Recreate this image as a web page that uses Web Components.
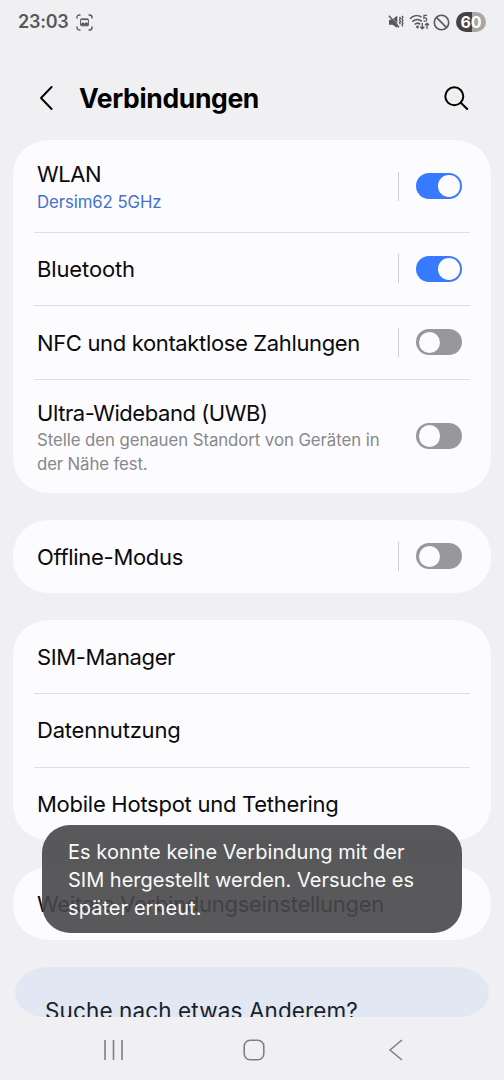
<!DOCTYPE html>
<html lang="de">
<head>
<meta charset="utf-8">
<title>Verbindungen</title>
<style>
html,body{margin:0;height:100%}
body{background:#f0f0f2;font-family:Inter,Roboto,"Liberation Sans",sans-serif;color:#0a0a0c;overflow:hidden}
</style>
</head>
<body>
<phone-screen>
  <status-bar slot="status"></status-bar>
  <page-header slot="header"><fit-text w="180">Verbindungen</fit-text></page-header>
  <settings-card>
    <settings-row style="--h:92px" toggle="on" split><fit-text w="64">WLAN</fit-text><fit-text slot="sub" w="124.5" style="color:#4372cc">Dersim62 5GHz</fit-text></settings-row>
    <settings-row toggle="on" split><fit-text w="98">Bluetooth</fit-text></settings-row>
    <settings-row toggle="off" split><fit-text w="323">NFC und kontaktlose Zahlungen</fit-text></settings-row>
    <settings-row style="--h:114px" toggle="off"><fit-text w="230.5">Ultra-Wideband (UWB)</fit-text><fit-text slot="sub" w="342.5">Stelle den genauen Standort von Geräten in</fit-text><fit-text slot="sub" w="110.5">der Nähe fest.</fit-text></settings-row>
  </settings-card>
  <settings-card>
    <settings-row toggle="off" split><fit-text w="146">Offline-Modus</fit-text></settings-row>
  </settings-card>
  <settings-card>
    <settings-row><fit-text w="138">SIM-Manager</fit-text></settings-row>
    <settings-row><fit-text w="143.5">Datennutzung</fit-text></settings-row>
    <settings-row><fit-text w="301.5">Mobile Hotspot und Tethering</fit-text></settings-row>
  </settings-card>
  <settings-card>
    <settings-row><fit-text w="347">Weitere Verbindungseinstellungen</fit-text></settings-row>
  </settings-card>
  <search-hint><fit-text w="313">Suche nach etwas Anderem?</fit-text></search-hint>
  <nav-bar slot="nav"></nav-bar>
  <toast-message slot="toast"><fit-text w="336.5">Es konnte keine Verbindung mit der</fit-text><fit-text w="346">SIM hergestellt werden. Versuche es</fit-text><fit-text w="133.5">später erneut.</fit-text></toast-message>
</phone-screen>
<script>
function element(name, html, setup) {
  customElements.define(name, class extends HTMLElement {
    connectedCallback() {
      if (this.shadowRoot) return;
      this.attachShadow({mode: 'open'}).innerHTML = html;
      if (setup) setup(this, this.shadowRoot);
    }
  });
}

element('phone-screen', `<style>
:host{display:flex;flex-direction:column;position:relative;width:504px;height:1080px;overflow:hidden;background:#f0f0f2}
main{height:877px;box-sizing:border-box;padding:0 13.5px 0 13px;display:flex;flex-direction:column;gap:26.45px;overflow:hidden}
</style><slot name="status"></slot><slot name="header"></slot><main><slot></slot></main><slot name="nav"></slot><slot name="toast"></slot>`);

element('status-bar', `<style>
:host{display:flex;align-items:center;height:44px;box-sizing:border-box;padding:0 18px;color:#59595b}
.time{font-size:18px;font-weight:600;line-height:22px}
svg{display:block;flex:none}
.shot{margin-left:7.500px}.right{margin-left:auto;display:flex;align-items:center}
.battery{width:30px;height:20px;margin-left:6px;border-radius:10px;background:linear-gradient(90deg,#434345 55%,#a7a7a9 55%);color:#fff;font:700 16px/20px Inter,sans-serif;text-align:center}
</style>
<span class="time"><fit-text w="50.5">23:03</fit-text></span>
<svg class="shot" width="17" height="17" viewBox="0 0 17 17" fill="none" stroke="currentColor" stroke-width="1.400"><path d="M1 4.500V3.500Q1 1 3.500 1h1M12.500 1h1Q16 1 16 3.500v1M16 12.500v1q0 2.500-2.500 2.500h-1M4.500 16h-1Q1 16 1 13.500v-1"/><rect x="4.600" y="5" width="7.800" height="6.800" rx=".8" stroke-width="1"/><path d="M5 11.500V9.800l2-1.500 1.600 1.100 1.700-1.200 2.100 1.300v2z" fill="currentColor" stroke="none"/><path d="M4.800 5.400h7.400" stroke-width="1.300"/></svg>
<span class="right">
<svg width="16" height="16" viewBox="0 0 16 16" fill="none" stroke="currentColor" stroke-width="1.300"><path d="M1 5.800h3.200L9.300 1.500V14L4.500 10.700H1z" fill="currentColor" stroke="none"/><path d="M2 2 12 13" stroke="#f0f0f2" stroke-width=".8"/><path d="M1 1.800 11 13.300" stroke-width="1.500"/><path d="M11.500 3l.9 1.200-.9 1.500.9 1.500-.9 1.500.9 1.500M14 1.800l.9 1.300-.9 1.600.9 1.600-.9 1.600.9 1.600-.9 1.600.9 1.400"/></svg>
<svg style="margin-left:5.500px" width="21" height="17" viewBox="0 0 21 17" fill="none" stroke="currentColor" stroke-width="1.600"><path d="M1 4.700C4.300 1.400 9 .9 12.500 3.100M3.300 7.700c2.800-2.700 6.800-2.800 9.600-.4M5.700 10.500c1.600-1.500 3.900-1.500 5.500-.1"/><circle cx="8.500" cy="13" r="1.400" fill="currentColor" stroke="none"/><path d="M18 1.400h-3l-.2 2.800c1.500-.6 3-.1 3 1.300S16 7.500 14.500 6.800" stroke-width="1.200"/><path d="M13.300 9v5.700M11.300 12.800l2 2 2-2M18 15V9.200M16 11.200l2-2 2 2" stroke-width="1.300"/></svg>
<svg style="margin-left:3px" width="17" height="17" viewBox="0 0 17 17" fill="none" stroke="currentColor" stroke-width="1.600"><circle cx="8.500" cy="8.500" r="7.200"/><path d="M3.400 3.400 13.600 13.600"/></svg>
<span class="battery">60</span></span>`);

element('page-header', `<style>
:host{display:flex;align-items:center;height:96px;box-sizing:border-box;padding:12px 35px 0 39px}
.title{font-size:26.500px;font-weight:700;line-height:34px;color:#000;margin:0 0 1px 25px}
svg{display:block}.search{margin-left:auto}
</style>
<svg width="15" height="26" viewBox="0 0 15 26" fill="none" stroke="#000" stroke-width="1.900" stroke-linecap="round" stroke-linejoin="round"><path d="M12.600 2 2 13l10.600 11"/></svg>
<span class="title"><slot></slot></span>
<svg class="search" width="26" height="26" viewBox="0 0 26 26" fill="none" stroke="#000" stroke-width="2" stroke-linecap="round"><circle cx="11.300" cy="11.300" r="9"/><path d="M17.800 17.800 24.200 24"/></svg>`);

element('settings-card', `<style>
:host{display:block;flex:none;background:#fcfcfe;border-radius:35px}
::slotted(:not(:last-child)){--line:#dedee0}
</style><slot></slot>`);

element('settings-row', `<style>
:host{display:flex;align-items:center;height:var(--h,73.6px);box-sizing:border-box;padding:0 28.5px 0 24px;position:relative}
.text{font-size:22px;line-height:29px;margin-top:1.400px}
.text.has-sub{margin-top:3px}
.sub{font-size:16.800px;line-height:23.600px;color:#88888a}
.sub ::slotted(*){display:block}
.has-sub .sub{margin-top:1.500px}
hr{position:absolute;left:21px;right:20.500px;bottom:-.8px;height:1px;margin:0;border:0;background:var(--line,transparent)}
.end{margin-left:auto;display:flex;align-items:center;gap:17px}
.bar{width:1px;height:29px;background:#cdcdd0}
</style>
<div class="text"><slot></slot><div class="sub"><slot name="sub"></slot></div></div>
<div class="end"></div><hr>`, (host, root) => {
  if (host.querySelector('[slot=sub]')) root.querySelector('.text').classList.add('has-sub');
  const end = root.querySelector('.end');
  if (host.hasAttribute('split')) end.innerHTML = '<span class="bar"></span>';
  if (host.hasAttribute('toggle')) end.insertAdjacentHTML('beforeend', `<toggle-switch ${host.getAttribute('toggle')}></toggle-switch>`);
});

element('toggle-switch', `<style>
:host{display:flex;align-items:center;width:46px;height:26px;box-sizing:border-box;padding:0 2.500px;border-radius:13px;background:#98989c}
:host([on]){background:#387aff;justify-content:flex-end}
i{width:21.500px;height:21.500px;border-radius:50%;background:#fcfcfe}
</style><i></i>`);

element('search-hint', `<style>
:host{display:block;flex:none;height:51px;box-sizing:border-box;margin:0 1.500px 0 2px;padding:28.600px 30px 0;background:#e1e7f3;border-radius:34px/25.500px;font-size:22.500px;line-height:29px;color:#1b1f28;overflow:visible}
</style><slot></slot>`);

element('nav-bar', `<style>
:host{display:flex;align-items:center;height:63px;box-sizing:border-box;padding:3px 100px 0 103px}
svg{display:block}
.home{margin:0 auto 0 119px}
</style>
<svg width="21" height="22" viewBox="0 0 21 22" stroke="#808082" stroke-width="1.600"><path d="M2 1v20M10.500 1v20M19 1v20"/></svg>
<svg class="home" width="22" height="22" viewBox="0 0 22 22" fill="none" stroke="#808082" stroke-width="1.600"><rect x="1.200" y="1.200" width="19.600" height="19.600" rx="6"/></svg>
<svg width="16" height="22" viewBox="0 0 16 22" fill="none" stroke="#808082" stroke-width="1.600"><path d="M14 1 2 11l12 10"/></svg>`);

element('toast-message', `<style>
:host{position:absolute;left:42px;top:825px;width:420px;height:108px;box-sizing:border-box;padding:13px 26px;border-radius:28px;background:rgba(71,71,73,.9);color:#fafafa;font-size:20px;line-height:28px}
::slotted(*){display:block}
</style><slot></slot>`);

/* Spreads a single line of text over the advance width given in "w". */
element('fit-text', `<style>:host{display:block;width:max-content;white-space:nowrap}</style><slot></slot>`, host => {
  const natural = host.getBoundingClientRect().width;
  host.style.letterSpacing = (host.getAttribute('w') - natural) / host.textContent.length + 'px';
});
</script>
</body>
</html>
